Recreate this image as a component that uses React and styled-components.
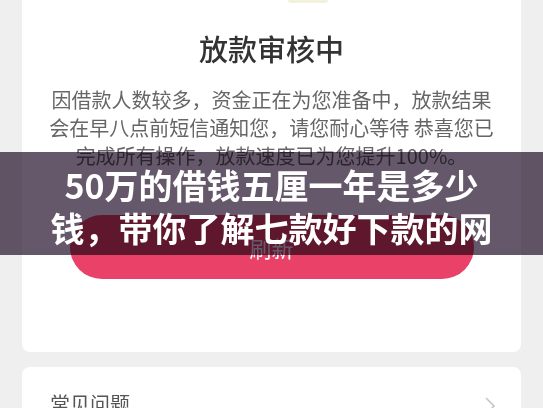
import React from 'react';
import styled, { createGlobalStyle } from 'styled-components';

const GlobalStyle = createGlobalStyle`
  html, body {
    margin: 0;
    padding: 0;
    background: #efefef;
  }
  body {
    font-family: "Noto Sans CJK SC", "Noto Sans", sans-serif;
  }
`;

function App() {
    return (
        <Page>
            <GlobalStyle />

            <Card>
                <IconStub />
                <Title>放款审核中</Title>
                <Notice>
                    因借款人数较多，资金正在为您准备中，放款结果<br />
                    会在早八点前短信通知您，请您耐心等待 恭喜您已<br />
                    完成所有操作，放款速度已为您提升100%。
                </Notice>
                <RefreshButton>刷新</RefreshButton>
            </Card>

            <Card $rounded>
                <FaqRow>
                    <FaqLabel>常见问题</FaqLabel>
                    <svg width="10" height="18" viewBox="0 0 10 18">
                        <polyline points="1,1 9,9 1,17" fill="none" stroke="#c6c6c6" strokeWidth="1.6" />
                    </svg>
                </FaqRow>
            </Card>

            {/* headline banner laid over the page */}
            <Banner>
                <BannerText>
                    50万的借钱五厘一年是多少<br />
                    钱，带你了解七款好下款的网
                </BannerText>
            </Banner>
        </Page>
    );
}

const Page = styled.div`
  position: relative;
  height: 408px;
  overflow: hidden;
  padding: 0 22px;
  display: flex;
  flex-direction: column;
  gap: 15px;
`;

const Card = styled.div`
  background: #fff;
  border-radius: ${p => p.$rounded ? '8px' : '0 0 8px 8px'};
  display: flex;
  flex-direction: column;
  align-items: center;
  padding-bottom: 73px;
  flex-shrink: 0;
  ${p => p.$rounded && 'align-items: stretch; height: 120px; padding-bottom: 0;'}
`;

const IconStub = styled.div`
  width: 40px;
  height: 3px;
  margin-left: 73px;
  border-radius: 0 0 20px 20px;
  background: #f3f2dd;
`;

const Title = styled.h2`
  margin: 25px 0 0;
  font-size: 29px;
  line-height: 40px;
  font-weight: 500;
  color: #333;
`;

const Notice = styled.p`
  margin: 18px 0 0;
  font-size: 20px;
  line-height: 28px;
  color: #666;
  text-align: center;
  white-space: nowrap;
`;

const RefreshButton = styled.button`
  margin-top: 45px;
  width: 404px;
  height: 64px;
  border: none;
  border-radius: 32px;
  background: #ea4169;
  color: #fff;
  font-family: inherit;
  font-size: 22px;
`;

const FaqRow = styled.div`
  display: flex;
  justify-content: space-between;
  align-items: flex-start;
  padding: 23px 26px 0 28px;
  svg {
    margin-top: 7px;
  }
`;

const FaqLabel = styled.span`
  font-size: 20px;
  line-height: 28px;
  color: #555;
`;

const Banner = styled.div`
  position: absolute;
  top: 152px;
  left: 0;
  right: 0;
  height: 103px;
  overflow: hidden;

  &::before {
    content: "";
    position: absolute;
    inset: 0;
    background: #66586b;
    mix-blend-mode: multiply;
  }
`;

const BannerText = styled.div`
  position: relative;
  padding-top: 11px;
  font-size: 34px;
  line-height: 43px;
  font-weight: 700;
  color: #fff;
  text-align: center;
  white-space: nowrap;
`;

export default App;
